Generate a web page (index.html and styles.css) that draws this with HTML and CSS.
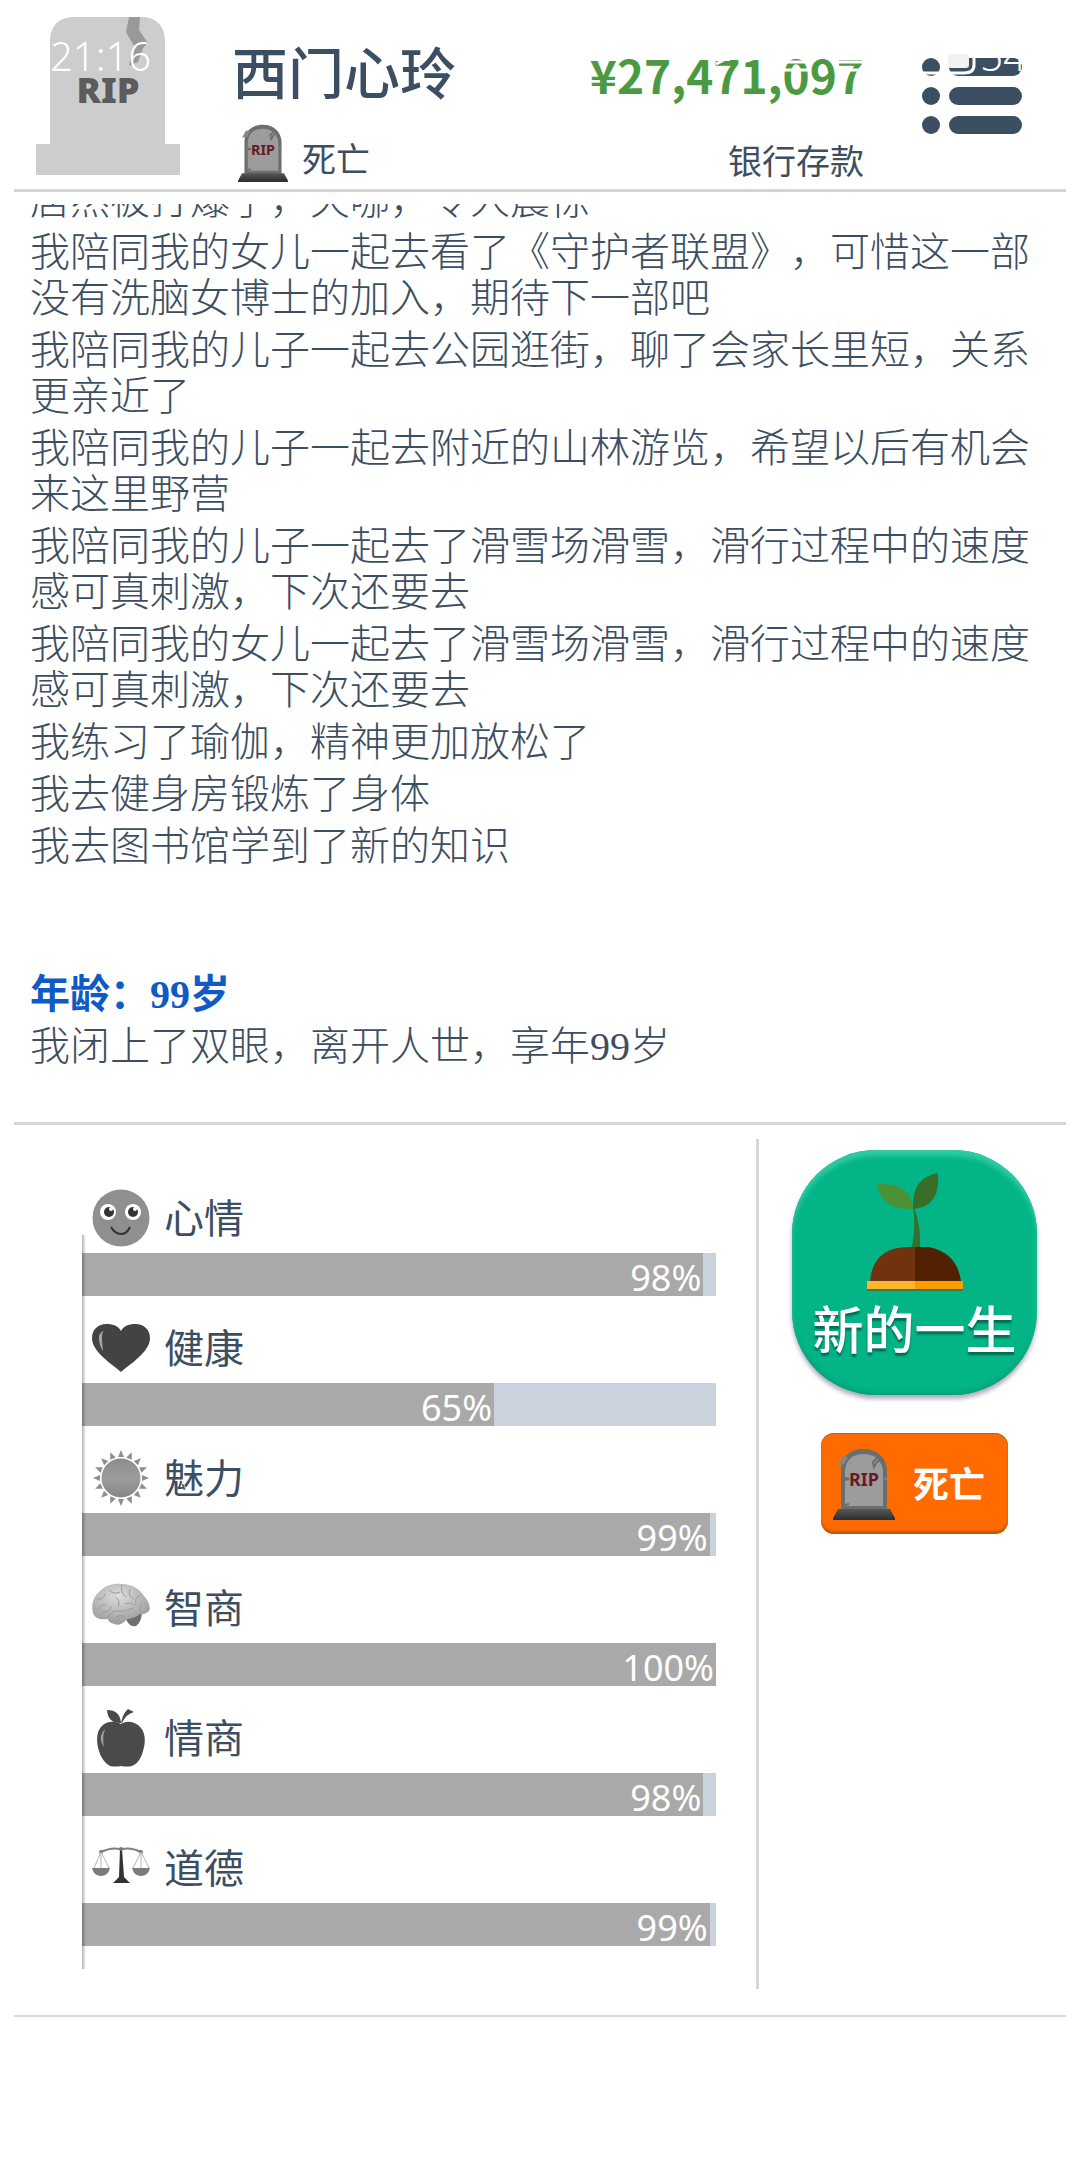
FILE: index.html
```
<!DOCTYPE html>
<html lang="zh-CN">
  <head>
    <meta charset="utf-8">
    <title>人生模拟</title>
    <link rel="stylesheet" href="styles.css">
  </head>
  <body>
    <!-- shared drawings -->
    <svg class="defs" width="0" height="0">
      <defs>
        <linearGradient id="gBase" x1="0" y1="0" x2="0" y2="1">
          <stop offset="0" stop-color="#565858" />
          <stop offset="1" stop-color="#2c2e2e" />
        </linearGradient>
        <linearGradient id="gSun" x1="0" y1="0" x2="0" y2="1">
          <stop offset="0" stop-color="#8c8c8c" />
          <stop offset="0.5" stop-color="#9c9c9c" />
          <stop offset="1" stop-color="#868686" />
        </linearGradient>
        <radialGradient id="gBrain" cx="0.45" cy="0.3" r="0.7">
          <stop offset="0" stop-color="#dedede" />
          <stop offset="1" stop-color="#9a9a9a" />
        </radialGradient>
        <symbol id="tomb" viewBox="0 0 62 72">
          <path d="M8 62V22C8 8 18 1 31 1s23 9 23 22v39z" fill="#6c6d6d" />
          <path d="M12 58V25C12 12 19 6 31 6s19 8 19 19v33z" fill="#9c9c9c" />
          <path d="M10 8l5 1-4 7-6 1zM54 29l-4 2 4 1z" fill="#858585" />
          <path d="M46 8l-6 6 1 5 3-5 5-3M12 30l4 1-4 1M12 57l4-1" fill="none" stroke="#6c6d6d" stroke-width="2" />
          <path d="M5 61h52l5 9v2H0v-2z" fill="url(#gBase)" />
          <text x="31" y="38" class="tomb-text">RIP</text>
        </symbol>
      </defs>
    </svg>

    <div class="page">
      <header class="header">
        <svg class="avatar" viewBox="0 0 144 158">
          <path d="M14 127V24C14 9 23 0 38 0h68c14 0 23 9 23 24v103h15v31H0v-31z" fill="#cdcdcd" />
          <path d="M93 0h11l-1 13 9 13-5 5-5 14-9 4 3-14 2-6-8-14z" fill="#999" />
          <text x="72" y="86" class="avatar-text">RIP</text>
        </svg>
        <div class="person">
          <h1 class="name">西门心玲</h1>
          <div class="status">
            <svg class="status-icon"><use href="#tomb" /></svg>
            <span>死亡</span>
          </div>
        </div>
        <div class="bank">
          <div class="money">¥27,471,097</div>
          <div class="bank-label">银行存款</div>
        </div>
        <button class="menu" type="button" aria-label="菜单">
          <svg viewBox="0 0 100 76" width="100" height="76">
            <g fill="#3c4e62">
              <circle cx="9" cy="9" r="9" />
              <circle cx="9" cy="38" r="9" />
              <circle cx="9" cy="67" r="9" />
              <rect x="27" y="0" width="73" height="18" rx="9" />
              <rect x="27" y="29" width="73" height="18" rx="9" />
              <rect x="27" y="58" width="73" height="18" rx="9" />
            </g>
          </svg>
        </button>
        <div class="phone-bar">
          <span>21:16</span>
          <svg viewBox="0 0 460 40" width="460" height="40">
            <g fill="none" stroke="#fff" stroke-width="3">
              <path d="M196 28l16-8M264 26h26M264 34h26M316 26h30M316 34h30" />
              <path d="M400 37h22M430 37h14q10 0 10-8v-9" />
            </g>
            <rect x="192" y="18" width="18" height="7" fill="#fff" />
            <rect x="428" y="18" width="21" height="14" rx="3" fill="#f1f1f1" />
          </svg>
          <span>54</span>
        </div>
      </header>

      <main class="log">
        <p>居然被打爆了，天哪，令人震惊</p>
        <p>我陪同我的女儿一起去看了《守护者联盟》，可惜这一部没有洗脑女博士的加入，期待下一部吧</p>
        <p>我陪同我的儿子一起去公园逛街，聊了会家长里短，关系更亲近了</p>
        <p>我陪同我的儿子一起去附近的山林游览，希望以后有机会来这里野营</p>
        <p>我陪同我的儿子一起去了滑雪场滑雪，滑行过程中的速度感可真刺激，下次还要去</p>
        <p>我陪同我的女儿一起去了滑雪场滑雪，滑行过程中的速度感可真刺激，下次还要去</p>
        <p>我练习了瑜伽，精神更加放松了</p>
        <p>我去健身房锻炼了身体</p>
        <p>我去图书馆学到了新的知识</p>
        <h2 class="age">年龄：99岁</h2>
        <p>我闭上了双眼，离开人世，享年99岁</p>
      </main>

      <section class="panel">
        <div class="stats">
          <div class="stat">
            <div class="stat-head">
              <svg viewBox="0 0 58 58">
                <circle cx="29" cy="29" r="28.500" fill="#8f8f8f" />
                <circle cx="16" cy="23" r="8" fill="#fff" />
                <circle cx="41" cy="23" r="8" fill="#fff" />
                <circle cx="17" cy="23" r="5" fill="#333" />
                <circle cx="41" cy="23" r="5" fill="#333" />
                <circle cx="19" cy="20" r="2" fill="#fff" />
                <circle cx="43" cy="20" r="2" fill="#fff" />
                <path d="M19 38q4 7 10 7t9-7" fill="none" stroke="#333" stroke-width="2" />
              </svg>
              <span>心情</span>
            </div>
            <div class="bar"><div class="fill" style="width: 98%">98%</div></div>
          </div>
          <div class="stat">
            <div class="stat-head">
              <svg viewBox="0 0 58 58">
                <path d="M29 53C20 45 0 33 0 19 0 10 7 5 14 5c6 0 12 1 15 7 3-6 9-7 15-7 7 0 14 5 14 14 0 14-20 26-29 34z" fill="#434343" />
                <path d="M11 12q-5 3-4 9 1 7 4 11-1-9-1-14t2-6z" fill="#a5a5a5" />
              </svg>
              <span>健康</span>
            </div>
            <div class="bar"><div class="fill" style="width: 65%">65%</div></div>
          </div>
          <div class="stat">
            <div class="stat-head">
              <svg viewBox="-29 -29 58 58">
                <defs>
                  <path id="ray" d="M-3-21L0-28l3 7z" fill="#8e8e8e" />
                </defs>
                <circle r="19.500" fill="url(#gSun)" />
                <use href="#ray" />
                <use href="#ray" transform="rotate(22.5)" />
                <use href="#ray" transform="rotate(45)" />
                <use href="#ray" transform="rotate(67.5)" />
                <use href="#ray" transform="rotate(90)" />
                <use href="#ray" transform="rotate(112.5)" />
                <use href="#ray" transform="rotate(135)" />
                <use href="#ray" transform="rotate(157.5)" />
                <use href="#ray" transform="rotate(180)" />
                <use href="#ray" transform="rotate(202.5)" />
                <use href="#ray" transform="rotate(225)" />
                <use href="#ray" transform="rotate(247.5)" />
                <use href="#ray" transform="rotate(270)" />
                <use href="#ray" transform="rotate(292.5)" />
                <use href="#ray" transform="rotate(315)" />
                <use href="#ray" transform="rotate(337.5)" />
              </svg>
              <span>魅力</span>
            </div>
            <div class="bar"><div class="fill" style="width: 99%">99%</div></div>
          </div>
          <div class="stat">
            <div class="stat-head">
              <svg viewBox="0 0 58 58">
                <path d="M33 38q8-6 17-4-1 10-6 13-7 2-11-9z" fill="#6f6f6f" />
                <path d="M1 34C-1 26 1 18 8 12 14 6 22 4 30 5c10 0 18 5 22 12 5 5 7 12 5 15-3 3-6 3-9 3-4 4-10 4-14 6-3 4-8 6-12 4-4-1-6-3-6-5C10 41 3 40 1 34z" fill="url(#gBrain)" />
                <path d="M5 20q6 1 8-5M14 26q-6-1-8 5M17 11q5 5 11 2M30 6q-2 8 4 12M23 18q6 3 3 10M38 10q-3 7 4 10M48 16q-6 3-4 10M33 25q6-3 10 2M16 39q3-8 10-7t15-3M24 43q2-6 9-5M10 33q8 1 9-6M50 25q-4 3-1 7M24 38q5-3 8-1" fill="none" stroke="#9b9b9b" stroke-width="1" />
              </svg>
              <span>智商</span>
            </div>
            <div class="bar"><div class="fill" style="width: 100%">100%</div></div>
          </div>
          <div class="stat">
            <div class="stat-head">
              <svg viewBox="0 0 58 58">
                <path d="M29 15c6-4 13-2 17 1 8 6 8 17 5 26-2 8-6 13-11 15q-5 1-11 0-6 1-11 0C13 54 9 49 7 42 4 33 4 21 11 16c5-4 12-4 18-1z" fill="#4a4a4a" />
                <path d="M28 14q-12 0-13-13 13 0 14 13zM29 14Q31 4 36 0l6 3Q34 5 30 14z" fill="#4a4a4a" />
                <path d="M13 20q-8 8-1 18-2-9 1-18z" fill="#a0a0a0" />
              </svg>
              <span>情商</span>
            </div>
            <div class="bar"><div class="fill" style="width: 98%">98%</div></div>
          </div>
          <div class="stat">
            <div class="stat-head">
              <svg viewBox="0 0 58 58">
                <path d="M9 13q10-5 19-3h2q9-2 19 3" fill="none" stroke="#808080" stroke-width="2" />
                <path d="M28 10h2l2 28 6 6H21l6-6z" fill="#333" />
                <circle cx="29" cy="10" r="2" fill="#777" />
                <circle cx="9" cy="13" r="2" fill="#777" />
                <circle cx="49" cy="13" r="2" fill="#777" />
                <path d="M9 13L2 29M9 13l8 16M9 13v16M49 13l-8 16M49 13l8 16M49 13v16" fill="none" stroke="#b5b5b5" />
                <path d="M0 29h18q-2 8-9 8t-9-8zM40 29h18q-2 8-9 8t-9-8z" fill="#7b7b7b" />
              </svg>
              <span>道德</span>
            </div>
            <div class="bar"><div class="fill" style="width: 99%">99%</div></div>
          </div>
        </div>

        <aside class="actions">
          <button class="new-life" type="button">
            <svg viewBox="0 0 96 118" width="96" height="118">
              <path d="M46 32q8 18 7 42h-8q4-22 1-42z" fill="#33702c" />
              <path d="M10 11q34-2 36 25Q15 38 10 11z" fill="#4b9136" />
              <path d="M46 33Q45 5 71 0q3 34-25 36z" fill="#376f28" />
              <path d="M3 108Q6 74 42 74h6v34z" fill="#71330f" />
              <path d="M48 74h14q28 6 32 34H48z" fill="#522003" />
              <path d="M0 108h48v8H0z" fill="#fdb52b" />
              <path d="M48 108h48v8H48z" fill="#fb9c00" />
              <path d="M0 116h96v2H0z" fill="#347d4a" />
            </svg>
            <span>新的一生</span>
          </button>
          <button class="death" type="button">
            <svg><use href="#tomb" /></svg>
            <span>死亡</span>
          </button>
        </aside>
      </section>
    </div>
  </body>
</html>
```
FILE: styles.css
```
* {
  box-sizing: border-box;
}
body {
  margin: 0;
  background: #fff;
  color: #3c4e62;
  font-family: "Noto Sans CJK SC", sans-serif;
}
button {
  border: 0;
  padding: 0;
  background: none;
  font-family: inherit;
}
h1,
h2,
p {
  margin: 0;
}
.defs {
  display: block;
}
.page {
  padding: 0 14px;
}

/* header */
.header {
  position: relative;
  display: flex;
  align-items: flex-start;
  padding: 17px 44px 7px 22px;
  border-bottom: 3px solid #d4d5da;
}
.avatar {
  width: 144px;
  height: 158px;
  margin-bottom: 7px;
}
.avatar-text {
  font: 900 36px "Noto Sans", sans-serif;
  text-anchor: middle;
  fill: #5c5c5c;
}
.person {
  margin-left: 52px;
}
.name {
  padding-top: 25px;
  font-size: 56px;
  font-weight: 500;
  line-height: 56px;
}
.status {
  display: flex;
  align-items: center;
  margin-top: 26px;
  padding-left: 6px;
  gap: 14px;
  font-size: 34px;
  line-height: 48px;
}
.status span {
  padding-top: 10px;
}
.status-icon {
  width: 50px;
  height: 58px;
}
.tomb-text {
  font: 700 18px "Noto Sans", sans-serif;
  text-anchor: middle;
  fill: #6b1a22;
}
.bank {
  margin-left: auto;
  padding-top: 26px;
  text-align: right;
}
.money {
  color: #4b9a41;
  font-size: 46px;
  font-weight: 700;
  line-height: 62px;
}
.bank-label {
  margin-top: 33px;
  font-size: 34px;
  line-height: 44px;
}
.menu {
  margin: 41px 0 0 58px;
  line-height: 0;
}

/* white phone status bar that lies over the header */
.phone-bar {
  position: absolute;
  top: 36px;
  left: 36px;
  right: 40px;
  display: flex;
  justify-content: space-between;
  color: #fff;
  font: 300 40px "Noto Sans", sans-serif;
  line-height: 40px;
  pointer-events: none;
}
.phone-bar svg {
  margin-left: auto;
}

/* life log */
.log {
  display: flex;
  flex-direction: column;
  justify-content: flex-end;
  gap: 6px;
  height: 918px;
  margin-top: 12px;
  padding: 0 36px 52px 16px;
  overflow: hidden;
  font-family: "Liberation Serif", "Noto Sans CJK SC", serif;
  font-size: 40px;
  font-weight: 300;
  line-height: 46px;
  text-spacing-trim: space-all;
}
.age {
  margin-top: 96px;
  color: #0f5bc6;
  font-size: 40px;
  font-weight: 700;
}

/* bottom panel */
.panel {
  display: flex;
  padding: 14px 0 26px;
  border-top: 3px solid #d6d7da;
  border-bottom: 2px solid #d6d7da;
}
.stats {
  position: relative;
  flex: 1;
  padding: 44px 40px 43px 68px;
  border-right: 3px solid #d6d7da;
}
.stats::before {
  content: "";
  position: absolute;
  left: 68px;
  top: 96px;
  bottom: 20px;
  width: 4px;
  background: linear-gradient(to right, rgba(0, 0, 0, 0.3), rgba(0, 0, 0, 0));
}
.stat-head {
  display: flex;
  align-items: center;
  gap: 14px;
  height: 70px;
  padding-left: 10px;
  font-size: 40px;
}
.stat-head svg {
  width: 58px;
  height: 58px;
}
.stat-head span {
  padding-bottom: 4px;
}
.bar {
  height: 43px;
  background: #c9d2dd;
}
.fill {
  height: 43px;
  padding-right: 2px;
  background: #a9a9a9;
  color: #fff;
  font: 36px "Noto Sans", sans-serif;
  line-height: 50px;
  text-align: right;
}
.stat + .stat {
  margin-top: 17px;
}

.actions {
  display: flex;
  flex-direction: column;
  align-items: center;
  gap: 38px;
  width: 307px;
  padding: 11px 0 0 4px;
}
.new-life {
  display: flex;
  flex-direction: column;
  align-items: center;
  width: 245px;
  height: 245px;
  padding-top: 23px;
  border-radius: 84px;
  background: #03b487;
  box-shadow: 0 4px 4px rgba(40, 20, 60, 0.35), inset 0 6px 5px #2fcba3, inset 0 -4px 4px #03a57b;
  color: #fff;
  font-size: 51px;
  font-weight: 500;
  line-height: 72px;
  text-shadow: 0 3px 2px rgba(0, 60, 50, 0.6);
}
.death {
  display: flex;
  align-items: center;
  gap: 18px;
  width: 187px;
  height: 101px;
  padding-left: 12px;
  border-radius: 13px;
  background: #ff6b00;
  box-shadow: inset 0 1px 1px #a8663a, inset 0 -3px 2px #c85708;
  color: #fff;
  font-size: 36px;
  font-weight: 700;
  line-height: 50px;
}
.death svg {
  width: 62px;
  height: 72px;
}
.death span {
  padding-bottom: 4px;
}
```
